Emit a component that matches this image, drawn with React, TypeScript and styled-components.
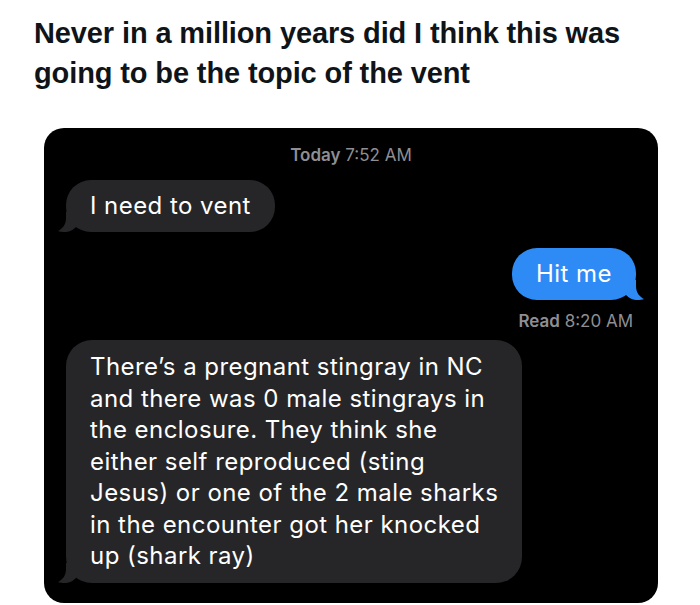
import React from "react";
import styled, { createGlobalStyle } from "styled-components";

const Global = createGlobalStyle`
  html, body { margin: 0; padding: 0; background: #ffffff; }
  body { width: 700px; height: 605px; overflow: hidden; }
`;

const Page = styled.div`
  width: 700px;
  height: 605px;
  background: #ffffff;
  display: flex;
  flex-direction: column;
`;

const Title = styled.h1`
  margin: 0;
  padding: 13px 0 0 34px;
  font-family: "Liberation Sans", Arial, sans-serif;
  font-weight: 700;
  font-size: 29px;
  line-height: 40px;
  letter-spacing: -0.12px;
  color: #0f1419;
  white-space: nowrap;
`;

const Panel = styled.div`
  margin: 35px 0 0 44px;
  width: 614px;
  height: 475px;
  background: #000000;
  border-radius: 20px;
  display: flex;
  flex-direction: column;
  padding: 16px 22px 0 22px;
  box-sizing: border-box;
  font-family: "Inter", "Liberation Sans", sans-serif;
`;

const Meta = styled.div<{ $align: "center" | "right"; $top?: number }>`
  font-size: 17px;
  line-height: 22px;
  color: #8e8e93;
  text-align: ${(p) => p.$align};
  margin-top: ${(p) => p.$top ?? 0}px;
  padding-right: ${(p) => (p.$align === "right" ? "3px" : "0")};
  b { font-weight: 600; }
`;

const Row = styled.div<{ $mine?: boolean; $top: number }>`
  display: flex;
  justify-content: ${(p) => (p.$mine ? "flex-end" : "flex-start")};
  margin-top: ${(p) => p.$top}px;
`;

const Bubble = styled.div<{ $mine?: boolean; $pad?: number }>`
  position: relative;
  background: ${(p) => (p.$mine ? "#2e8bf6" : "#262628")};
  color: #ffffff;
  font-size: 24px;
  line-height: 32px;
  letter-spacing: 0.45px;
  padding: ${(p) => p.$pad ?? 10}px 24px;
  border-radius: 25px;
  white-space: nowrap;
`;

const Tall = styled(Bubble)`
  line-height: 31.5px;
  border-radius: 26px;
`;

const Tail = styled.svg<{ $mine?: boolean }>`
  position: absolute;
  bottom: 0;
  width: 22px;
  height: 20px;
  ${(p) => (p.$mine ? "right: -8px; transform: scaleX(-1);" : "left: -8px;")}
`;

function BubbleTail({ mine, color }: { mine?: boolean; color: string }) {
  return (
    <Tail $mine={mine} viewBox="0 0 22 20">
      <path d="M 8 0 L 18 0 L 18 15 C 15 18 12 19.5 8 20 C 4 20 1.5 19.6 0 19 C 4 17 8 13 8 6 Z" fill={color} />
    </Tail>
  );
}

export default function App() {
  return (
    <Page>
      <Global />
      <Title>
        Never in a million years did I think this was
        <br />
        going to be the topic of the vent
      </Title>
      <Panel>
        <Meta $align="center">
          <b>Today</b> 7:52 AM
        </Meta>
        <Row $top={14}>
          <Bubble>
            I need to vent
            <BubbleTail color="#262628" />
          </Bubble>
        </Row>
        <Row $mine $top={16}>
          <Bubble $mine>
            Hit me
            <BubbleTail mine color="#2e8bf6" />
          </Bubble>
        </Row>
        <Meta $align="right" $top={10}>
          <b>Read</b> 8:20 AM
        </Meta>
        <Row $top={8}>
          <Tall $pad={11}>
            There’s a pregnant stingray in NC
            <br />
            and there was 0 male stingrays in
            <br />
            the enclosure. They think she
            <br />
            either self reproduced (sting
            <br />
            Jesus) or one of the 2 male sharks
            <br />
            in the encounter got her knocked
            <br />
            up (shark ray)
            <BubbleTail color="#262628" />
          </Tall>
        </Row>
      </Panel>
    </Page>
  );
}
